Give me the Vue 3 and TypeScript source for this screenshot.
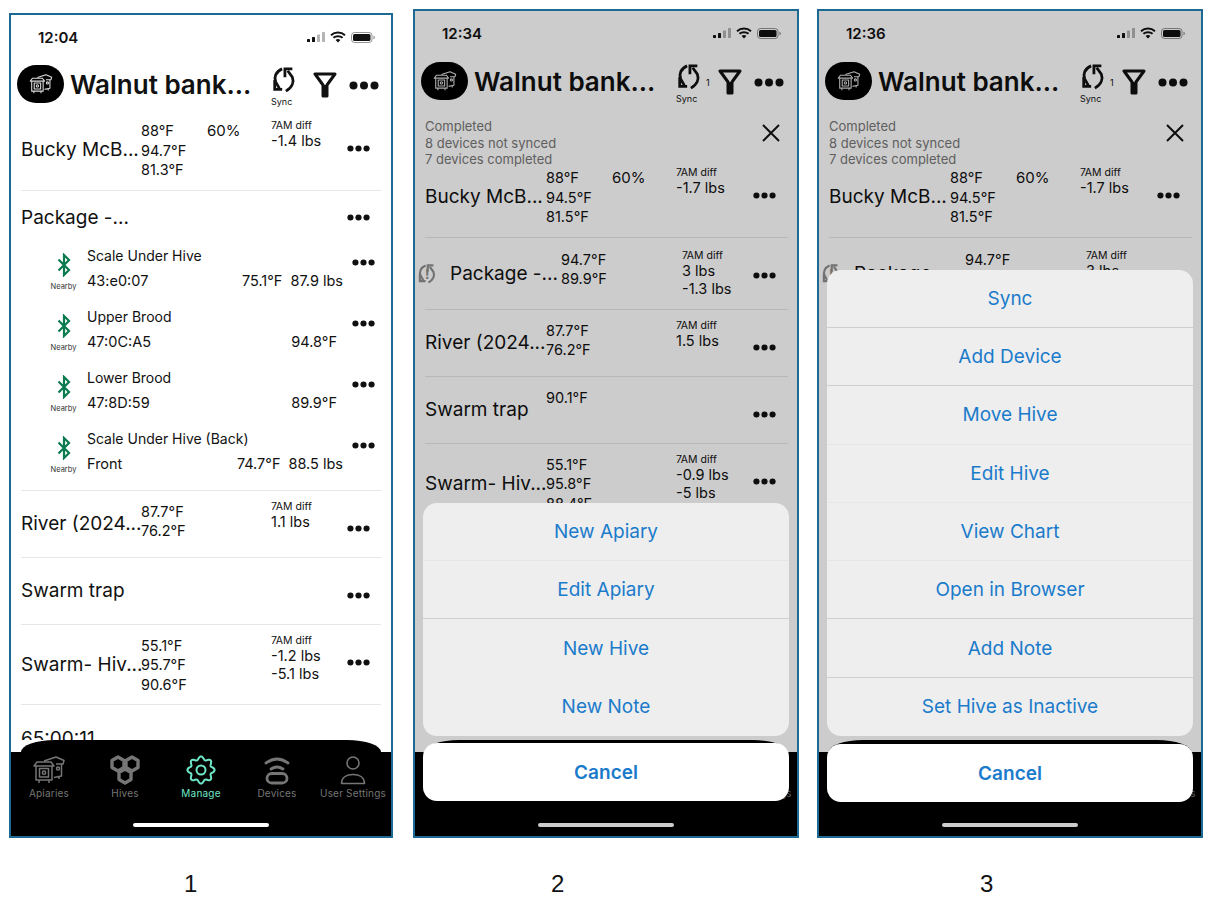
<script setup lang="ts">
interface Device {
  title: string
  sub: string
  temp?: string
  weight?: string
  solo?: boolean
}
interface Row {
  name: string
  temps?: string[]
  pct?: string
  diffs?: string[]
  warn?: boolean
  devices?: Device[]
}
interface SheetItem {
  label: string
  line?: 'soft' | 'hard'
}
interface Phone {
  time: string
  count?: string
  rows: Row[]
  sheet?: SheetItem[]
}

const firstRows: Row[] = [
  { name: 'Bucky McB...', temps: ['88°F', '94.7°F', '81.3°F'], pct: '60%', diffs: ['-1.4 lbs'] },
  {
    name: 'Package -...',
    devices: [
      { title: 'Scale Under Hive', sub: '43:e0:07', temp: '75.1°F', weight: '87.9 lbs' },
      { title: 'Upper Brood', sub: '47:0C:A5', temp: '94.8°F', solo: true },
      { title: 'Lower Brood', sub: '47:8D:59', temp: '89.9°F', solo: true },
      { title: 'Scale Under Hive (Back)', sub: 'Front', temp: '74.7°F', weight: '88.5 lbs' }
    ]
  },
  { name: 'River (2024...', temps: ['87.7°F', '76.2°F'], diffs: ['1.1 lbs'] },
  { name: 'Swarm trap' },
  { name: 'Swarm- Hiv...', temps: ['55.1°F', '95.7°F', '90.6°F'], diffs: ['-1.2 lbs', '-5.1 lbs'] },
  { name: '65:00:11' }
]

const syncedRows: Row[] = [
  { name: 'Bucky McB...', temps: ['88°F', '94.5°F', '81.5°F'], pct: '60%', diffs: ['-1.7 lbs'] },
  { name: 'Package -...', warn: true, temps: ['94.7°F', '89.9°F'], diffs: ['3 lbs', '-1.3 lbs'] },
  { name: 'River (2024...', temps: ['87.7°F', '76.2°F'], diffs: ['1.5 lbs'] },
  { name: 'Swarm trap', temps: ['90.1°F'] },
  { name: 'Swarm- Hiv...', temps: ['55.1°F', '95.8°F', '88.4°F'], diffs: ['-0.9 lbs', '-5 lbs'] }
]

const phones: Phone[] = [
  { time: '12:04', rows: firstRows },
  {
    time: '12:34',
    count: '1',
    rows: syncedRows,
    sheet: [
      { label: 'New Apiary', line: 'soft' },
      { label: 'Edit Apiary', line: 'hard' },
      { label: 'New Hive' },
      { label: 'New Note' }
    ]
  },
  {
    time: '12:36',
    count: '1',
    rows: syncedRows,
    sheet: [
      { label: 'Sync', line: 'hard' },
      { label: 'Add Device', line: 'hard' },
      { label: 'Move Hive', line: 'soft' },
      { label: 'Edit Hive', line: 'soft' },
      { label: 'View Chart', line: 'soft' },
      { label: 'Open in Browser', line: 'hard' },
      { label: 'Add Note', line: 'hard' },
      { label: 'Set Hive as Inactive' }
    ]
  }
]

const tabs = [
  { label: 'Apiaries', icon: '#i-hive' },
  { label: 'Hives', icon: '#i-comb' },
  { label: 'Manage', icon: '#i-gear', active: true },
  { label: 'Devices', icon: '#i-device' },
  { label: 'User Settings', icon: '#i-user' }
]

// wavy ring for the gear, 8 lobes
const gearPath = (() => {
  const pts: string[] = []
  for (let i = 0; i < 128; i++) {
    const a = (i / 128) * Math.PI * 2
    const r = 12 + 1.6 * Math.cos(a * 8)
    pts.push(`${(15 + r * Math.sin(a)).toFixed(2)} ${(15 - r * Math.cos(a)).toFixed(2)}`)
  }
  return 'M' + pts.join('L') + 'Z'
})()
</script>

<template>
  <div class="page">
    <svg class="defs" width="0" height="0">
      <symbol id="i-hive" viewBox="0 0 32 28">
        <g fill="none" stroke="currentColor" stroke-width="1.5" stroke-linejoin="round">
          <path d="M1 10 4 6H18L21 10Z" />
          <path d="M3 10V24H19V10" />
          <rect x="6.5" y="12.5" width="9" height="8.5" />
          <circle cx="11" cy="16.7" r="1.6" />
          <path d="M6 24v3M16 24v3" />
          <path d="M11 5 23 1 31 4.5 30 8H23" />
          <path d="M28.5 8V20L21 21.5" />
          <circle cx="25" cy="12.5" r="1.5" />
          <path d="M26 20.5v2.5" />
        </g>
      </symbol>
      <symbol id="i-comb" viewBox="0 0 32 30">
        <g fill="none" stroke="currentColor" stroke-width="3.4" stroke-linejoin="round">
          <path d="M9 2 15 5.5V12.500L9 16 3 12.500V5.500Z" />
          <path d="M23 2 29 5.500V12.500L23 16 17 12.500V5.500Z" />
          <path d="M16 14 22 17.500V24.500L16 28 10 24.500V17.500Z" />
        </g>
      </symbol>
      <symbol id="i-gear" viewBox="0 0 30 30">
        <path :d="gearPath" fill="none" stroke="currentColor" stroke-width="2" />
        <circle cx="15" cy="15" r="4.500" fill="none" stroke="currentColor" stroke-width="2" />
      </symbol>
      <symbol id="i-device" viewBox="0 0 30 30">
        <g fill="none" stroke="currentColor" stroke-width="2.800" stroke-linecap="round">
          <path d="M4 8Q15 0 26 8" />
          <path d="M9 14Q15 10 21 14" />
          <rect x="5" y="18.500" width="20" height="9.500" rx="4.750" />
        </g>
      </symbol>
      <symbol id="i-user" viewBox="0 0 30 30">
        <g fill="none" stroke="currentColor" stroke-width="1.600">
          <circle cx="15" cy="8" r="6" />
          <path d="M3.500 28.500C3.500 22 9 19.500 15 19.500S26.500 22 26.500 28.500Z" stroke-linejoin="round" />
        </g>
      </symbol>
      <symbol id="i-sync" viewBox="0 0 28 28">
        <g fill="none" stroke="currentColor" stroke-width="3">
          <path d="M12 2C5 5 3 11 5 16L9 23" />
          <path d="M4 14V24H12" />
          <path d="M16 26C23 22 25 16 23 11L18 4" />
          <path d="M23 2H15V11" />
        </g>
      </symbol>
      <symbol id="i-filter" viewBox="0 0 24 26">
        <path d="M2 2H22L14 13V24H10V13Z" fill="none" stroke="currentColor" stroke-width="3" stroke-linejoin="round" />
        <rect x="10" y="13" width="4" height="11" fill="currentColor" />
      </symbol>
      <symbol id="i-dots" viewBox="0 0 30 9">
        <circle cx="4.500" cy="4.500" r="4" fill="currentColor" />
        <circle cx="15" cy="4.500" r="4" fill="currentColor" />
        <circle cx="25.500" cy="4.500" r="4" fill="currentColor" />
      </symbol>
      <symbol id="i-bt" viewBox="0 0 16 24">
        <path d="M2.500 6.500 13 17 8 22V2L13 7 2.500 17.500" fill="none" stroke="currentColor" stroke-width="2.200" />
      </symbol>
    </svg>

    <div v-for="(phone, p) in phones" :key="phone.time" class="col" :class="`col-${p + 1}`">
      <div class="phone" :class="{ dim: phone.sheet }">
        <div class="status">
          <span class="time">{{ phone.time }}</span>
          <div class="status-icons">
            <svg width="18" height="10" viewBox="0 0 18 10">
              <rect x="0" y="7" width="3" height="3" rx=".6" fill="currentColor" />
              <rect x="5" y="5" width="3" height="5" rx=".6" fill="currentColor" />
              <rect x="10" y="2.500" width="3" height="7.500" rx=".6" fill="#b5b5b5" />
              <rect x="15" y="0" width="3" height="10" rx=".6" fill="#b5b5b5" />
            </svg>
            <svg width="16" height="12" viewBox="0 0 16 12">
              <path d="M1 4.200C5 .6 11 .6 15 4.200M3.400 6.800C6 4.600 10 4.600 12.600 6.800" fill="none" stroke="currentColor" stroke-width="2" />
              <path d="M5.600 9 8 11.500 10.400 9C9 7.800 7 7.800 5.600 9Z" fill="currentColor" />
            </svg>
            <svg width="24" height="11" viewBox="0 0 24 11">
              <rect x=".5" y=".5" width="20.500" height="10" rx="3" fill="none" stroke="currentColor" stroke-opacity=".45" />
              <rect x="2" y="2" width="17.500" height="7" rx="1.600" fill="currentColor" />
              <path d="M22.500 3.800C23.400 4.100 23.800 4.800 23.800 5.500S23.400 6.900 22.500 7.200Z" fill="currentColor" fill-opacity=".5" />
            </svg>
          </div>
        </div>

        <div class="header">
          <div class="avatar">
            <svg class="avatar-icon"><use href="#i-hive" /></svg>
          </div>
          <div class="title">Walnut bank...</div>
          <div class="sync">
            <div class="sync-top">
              <svg class="sync-icon"><use href="#i-sync" /></svg>
              <span v-if="phone.count" class="sync-count">{{ phone.count }}</span>
            </div>
            <div class="sync-label">Sync</div>
          </div>
          <svg class="filter"><use href="#i-filter" /></svg>
          <svg class="head-dots"><use href="#i-dots" /></svg>
        </div>

        <div v-if="phone.sheet" class="banner">
          <div class="banner-text">
            <div>Completed</div>
            <div>8 devices not synced</div>
            <div>7 devices completed</div>
          </div>
          <svg class="close" viewBox="0 0 18 18">
            <path d="M1 1 17 17M17 1 1 17" stroke="currentColor" stroke-width="2" fill="none" />
          </svg>
        </div>

        <div class="list">
          <div v-for="row in phone.rows" :key="row.name" class="row">
            <div class="row-main" :class="{ 'row-warn': row.warn, 'row-group': row.devices }">
              <div class="name">
                <span v-if="row.warn" class="warn">
                  <svg class="warn-icon"><use href="#i-sync" /></svg>
                  <span class="warn-mark">!</span>
                </span>
                {{ row.name }}
              </div>
              <div class="temps">
                <div v-for="t in row.temps" :key="t">{{ t }}</div>
              </div>
              <div class="pct">{{ row.pct }}</div>
              <div class="diff">
                <template v-if="row.diffs">
                  <div class="diff-label">7AM diff</div>
                  <div v-for="d in row.diffs" :key="d" class="diff-val">{{ d }}</div>
                </template>
              </div>
              <svg class="row-dots"><use href="#i-dots" /></svg>
            </div>

            <div v-for="dev in row.devices" :key="dev.title" class="device">
              <div class="nearby">
                <svg class="bt"><use href="#i-bt" /></svg>
                <span>Nearby</span>
              </div>
              <div class="device-body">
                <div class="device-title">{{ dev.title }}</div>
                <div class="device-sub">
                  <span>{{ dev.sub }}</span>
                  <span class="device-vals" :class="{ solo: dev.solo }">
                    <span>{{ dev.temp }}</span>
                    <span v-if="dev.weight">{{ dev.weight }}</span>
                  </span>
                </div>
              </div>
              <svg class="row-dots device-dots"><use href="#i-dots" /></svg>
            </div>
          </div>
        </div>

        <div class="tabbar">
          <div class="hump"></div>
          <div class="tabs">
            <div v-for="tab in tabs" :key="tab.label" class="tab" :class="{ active: tab.active }">
              <svg class="tab-icon"><use :href="tab.icon" /></svg>
              <span>{{ tab.label }}</span>
            </div>
          </div>
          <div class="home-bar"></div>
        </div>

        <div v-if="phone.sheet" class="overlay">
          <div class="sheet">
            <div v-for="item in phone.sheet" :key="item.label" class="sheet-item" :class="item.line">
              {{ item.label }}
            </div>
          </div>
          <div class="cancel">Cancel</div>
        </div>
      </div>
      <div class="step">{{ p + 1 }}</div>
    </div>
  </div>
</template>

<style>
html,
body {
  margin: 0;
  background: #fff;
}
</style>

<style scoped>
.page {
  width: 1216px;
  height: 912px;
  display: flex;
  align-items: flex-start;
  padding-left: 9px;
  box-sizing: border-box;
  overflow: hidden;
  font-family: Inter, "Liberation Sans", sans-serif;
  color: #111;
}

.defs {
  position: absolute;
}

.col {
  flex: none;
  width: 386px;
  margin-right: 18px;
  padding-top: 9px;
}

.col-1 {
  width: 384px;
  margin-right: 20px;
  padding-top: 13px;
}

.phone {
  position: relative;
  height: 825px;
  border: 2px solid #1b6a93;
  display: flex;
  flex-direction: column;
  overflow: hidden;
  background: #fff;
}

.col-1 .phone {
  height: 821px;
}

.step {
  margin-top: 34px;
  font: 24px/24px "Liberation Sans", sans-serif;
  color: #111;
}

.col-1 .step {
  padding-left: 175px;
}

.col-2 .step {
  padding-left: 138px;
}

.col-3 .step {
  padding-left: 163px;
}

.status {
  flex: none;
  height: 50px;
  display: flex;
  padding: 14px 16px 0 27px;
  box-sizing: border-box;
  justify-content: space-between;
}

.dim .status {
  height: 51px;
}

.time {
  font-size: 15px;
  line-height: 18px;
  font-weight: 600;
}

.status-icons {
  display: flex;
  align-items: center;
  gap: 5px;
  height: 16px;
}

.header {
  flex: none;
  height: 45px;
  display: flex;
  align-items: flex-start;
  padding: 0 12px 0 6px;
  box-sizing: border-box;
}

.dim .header {
  padding-right: 13px;
}

.avatar {
  flex: none;
  width: 47px;
  height: 38px;
  border-radius: 19px;
  background: #000;
  display: flex;
  align-items: center;
  justify-content: center;
}

.avatar-icon {
  width: 24px;
  height: 20px;
  color: #ddd;
}

.title {
  flex: 1;
  margin-left: 6px;
  font-size: 26px;
  line-height: 40px;
  font-weight: 600;
  white-space: nowrap;
}

.sync {
  flex: none;
  width: 42px;
  margin-top: 2px;
}

.sync-top {
  display: flex;
  align-items: flex-end;
  gap: 4px;
}

.sync-icon {
  width: 26px;
  height: 26px;
}

.sync-count {
  font-size: 9px;
  line-height: 14px;
}

.sync-label {
  margin-top: 3px;
  font-size: 9px;
  line-height: 11px;
}

.filter {
  flex: none;
  width: 24px;
  height: 26px;
  margin-top: 7px;
}

.head-dots {
  flex: none;
  width: 30px;
  height: 9px;
  margin: 16px 0 0 12px;
}

.banner {
  flex: none;
  height: 39px;
  margin-top: 11px;
  padding: 0 17px 0 10px;
  display: flex;
  justify-content: space-between;
  align-items: flex-start;
}

.banner-text {
  font-size: 13px;
  line-height: 16.700px;
  color: #777;
}

.close {
  width: 18px;
  height: 18px;
  margin-top: 6px;
}

.list {
  flex: 1;
  min-height: 0;
  overflow: hidden;
}

.row {
  margin: 0 10px;
  border-bottom: 1px solid #e6e6e6;
}

.dim .row {
  margin-right: 9px;
}

.row:last-child {
  border-bottom: none;
}

.row-main {
  display: grid;
  grid-template-columns: 120px 66px 64px 76px auto;
  min-height: 66px;
  padding: 11px 0 10px;
  box-sizing: border-box;
}

.dim .row-main {
  grid-template-columns: 121px 66px 64px 77px auto;
}

.dim .row-main.row-warn {
  grid-template-columns: 136px 66px 55px 71px auto;
  min-height: 71px;
}

.row-group {
  min-height: 53px !important;
  height: 53px;
}

.name {
  align-self: center;
  display: flex;
  align-items: center;
  font-size: 19px;
  line-height: 24px;
  white-space: nowrap;
}

.warn {
  position: relative;
  flex: none;
  width: 20px;
  height: 20px;
  margin: 0 13px 0 -8px;
  color: #8f8f8f;
}

.warn-icon {
  width: 20px;
  height: 20px;
}

.warn-mark {
  position: absolute;
  left: 8px;
  top: 0;
  font-size: 13px;
  line-height: 20px;
  font-weight: 700;
}

.temps {
  font-size: 14.500px;
  line-height: 19.500px;
  white-space: nowrap;
}

.row-warn .temps {
  padding-top: 1px;
}

.pct {
  font-size: 15px;
  line-height: 19.500px;
  white-space: nowrap;
}

.diff {
  margin-top: -2px;
  white-space: nowrap;
}

.row-warn .diff {
  margin-top: 0;
}

.diff-label {
  font-size: 10.500px;
  line-height: 13px;
}

.diff-val {
  font-size: 14.500px;
  line-height: 18px;
}

.row-dots {
  width: 23px;
  height: 7px;
  margin-top: 23.500px;
}

.row-group .row-dots {
  margin-top: 12.500px;
}

.device {
  height: 61px;
  display: grid;
  grid-template-columns: 66px 256px auto;
  box-sizing: border-box;
}

.device:last-child {
  height: 63px;
}

.nearby {
  padding-left: 19px;
  display: flex;
  flex-direction: column;
  align-items: center;
  font-size: 7.500px;
  line-height: 10px;
  color: #333;
  padding-top: 9px;
}

.bt {
  width: 16px;
  height: 24px;
  color: #0c7a4f;
  margin-bottom: 5px;
}

.device-body {
  padding-top: 3px;
  font-size: 14px;
  line-height: 18px;
}

.device-sub {
  display: flex;
  justify-content: space-between;
  margin-top: 7px;
  font-size: 14.500px;
}

.device-vals {
  display: flex;
  gap: 8px;
}

.device-vals.solo {
  margin-right: 6px;
}

.device-dots {
  margin: 15.500px 0 0 9px;
}

.tabbar {
  flex: none;
  height: 96px;
  position: relative;
  display: flex;
  flex-direction: column;
}

.hump {
  flex: none;
  height: 12px;
  margin: 0 10px;
  background: #000;
  border-radius: 34px 34px 0 0 / 12px 12px 0 0;
}

.tabs {
  flex: 1;
  background: #000;
  display: flex;
  padding-top: 3px;
}

.tab {
  flex: 1 1 0;
  min-width: 0;
  display: flex;
  flex-direction: column;
  align-items: center;
  color: #767676;
  font-size: 10px;
  line-height: 12px;
  letter-spacing: .2px;
  white-space: nowrap;
}

.tab.active {
  color: #6fe6c8;
}

.tab-icon {
  flex: none;
  width: 32px;
  height: 30px;
  margin-bottom: 2px;
}

.home-bar {
  position: absolute;
  left: 50%;
  bottom: 9px;
  width: 136px;
  height: 4px;
  margin-left: -68px;
  border-radius: 2px;
  background: #fff;
}

.overlay {
  position: absolute;
  inset: 0;
  background: rgba(0, 0, 0, .2);
  display: flex;
  flex-direction: column;
  justify-content: flex-end;
  gap: 7px;
  padding: 0 8px 35px;
  box-sizing: border-box;
}

.col-3 .overlay {
  gap: 8px;
  padding-bottom: 34px;
}

.sheet {
  background: #eeeeee;
  border-radius: 14px;
  overflow: hidden;
}

.sheet-item {
  height: 58.300px;
  box-sizing: border-box;
  display: flex;
  align-items: center;
  justify-content: center;
  color: #1b7bcb;
  font-size: 19px;
}

.sheet-item.soft {
  border-bottom: 1px solid #e6e6e6;
}

.sheet-item.hard {
  border-bottom: 1px solid #cfcfcf;
}

.cancel {
  height: 58px;
  border-radius: 14px;
  background: #fff;
  display: flex;
  align-items: center;
  justify-content: center;
  color: #1b7bcb;
  font-size: 19px;
  font-weight: 600;
}
</style>
